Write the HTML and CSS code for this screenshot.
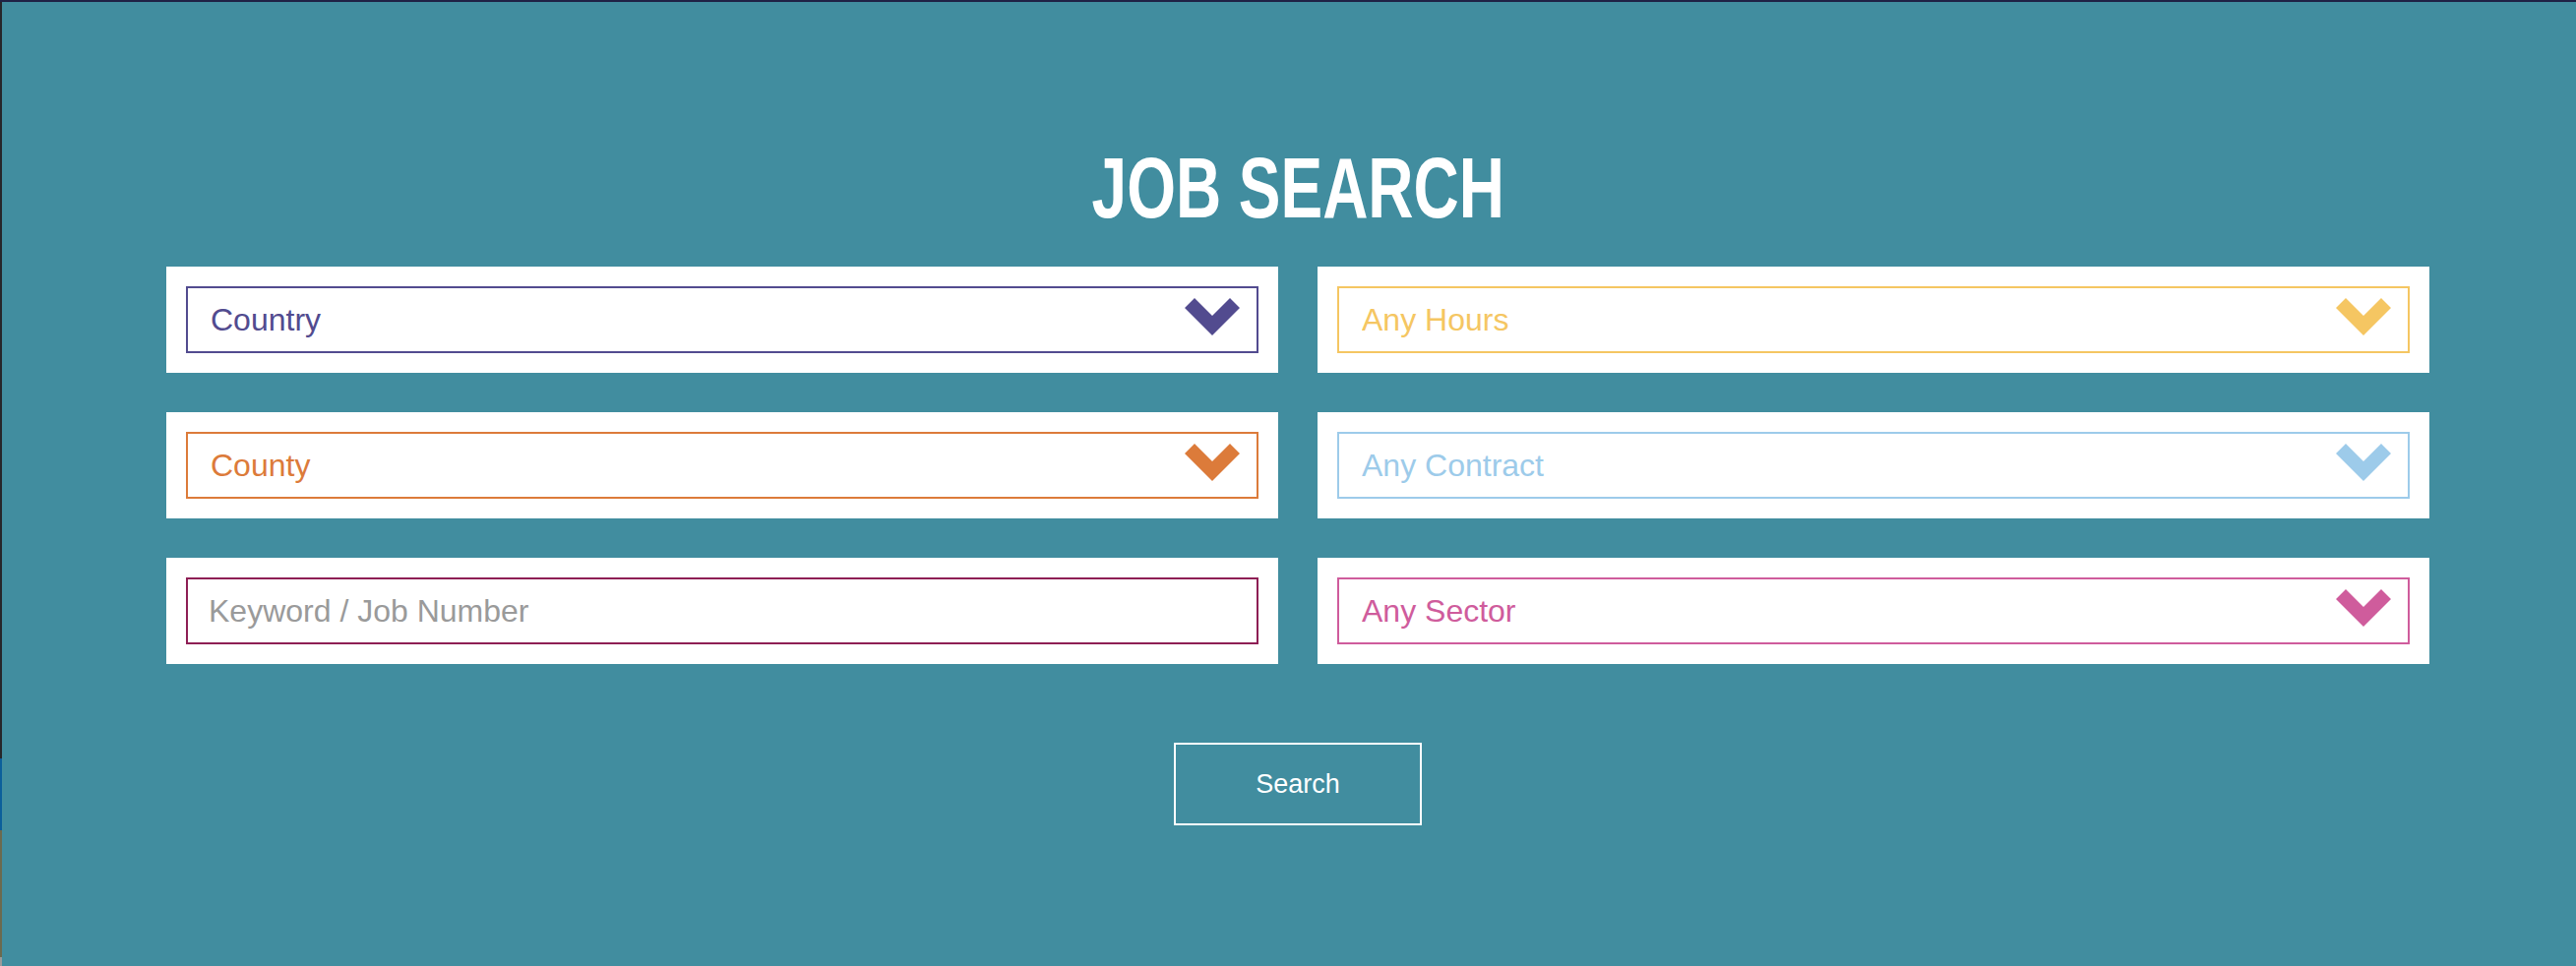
FILE: index.html
```html
<!DOCTYPE html>
<html lang="en">
<head>
<meta charset="utf-8">
<title>Job Search</title>
<link rel="stylesheet" href="styles.css">
</head>
<body>
<div class="edge"></div>
<main class="panel">
  <div class="container">
    <h1 class="title"><span class="title-text">JOB SEARCH</span></h1>
    <form class="grid">
      <div class="cell">
        <div class="field field-purple">
          <select class="control"><option>Country</option></select>
          <svg class="chev" viewBox="0 0 56 39"><polygon points="0,10 10,0 28,18 46,0 56,10 28,38"/></svg>
        </div>
      </div>
      <div class="cell">
        <div class="field field-yellow">
          <select class="control"><option>Any Hours</option></select>
          <svg class="chev" viewBox="0 0 56 39"><polygon points="0,10 10,0 28,18 46,0 56,10 28,38"/></svg>
        </div>
      </div>
      <div class="cell">
        <div class="field field-orange">
          <select class="control"><option>County</option></select>
          <svg class="chev" viewBox="0 0 56 39"><polygon points="0,10 10,0 28,18 46,0 56,10 28,38"/></svg>
        </div>
      </div>
      <div class="cell">
        <div class="field field-blue">
          <select class="control"><option>Any Contract</option></select>
          <svg class="chev" viewBox="0 0 56 39"><polygon points="0,10 10,0 28,18 46,0 56,10 28,38"/></svg>
        </div>
      </div>
      <div class="cell">
        <div class="field field-maroon">
          <input class="control input" type="text" placeholder="Keyword / Job Number">
        </div>
      </div>
      <div class="cell">
        <div class="field field-pink">
          <select class="control"><option>Any Sector</option></select>
          <svg class="chev" viewBox="0 0 56 39"><polygon points="0,10 10,0 28,18 46,0 56,10 28,38"/></svg>
        </div>
      </div>
    </form>
    <div class="actions">
      <button class="search" type="button">Search</button>
    </div>
  </div>
</main>
</body>
</html>
```
FILE: styles.css
```css
html, body {
  margin: 0;
  padding: 0;
  height: 100%;
}
body {
  display: flex;
  background: #418d9f;
  border-top: 2px solid #1f2245;
  box-sizing: border-box;
  font-family: "Liberation Sans", Arial, sans-serif;
  overflow: hidden;
}
.edge {
  width: 2px;
  flex: none;
  background: linear-gradient(to bottom, #26262a 0, #26262a 769px, #0b5f9b 769px, #0b5f9b 842px, #6b6a4f 842px, #6b6a4f 971px, #9a9a9a 971px);
}
.panel {
  flex: 1;
  background: #418d9f;
}
.container {
  width: 2300px;
  margin-left: 167px;
}
.title {
  margin: 145px 0 0;
  height: 124px;
  text-align: center;
  font-family: "Liberation Sans Narrow", "Liberation Sans", Arial, sans-serif;
  font-weight: 700;
  font-size: 87px;
  line-height: 87px;
  color: #fff;
  letter-spacing: 0;
}
.title-text {
  display: inline-block;
  transform: scaleX(0.735);
  transform-origin: center;
}
.grid {
  display: grid;
  grid-template-columns: 1fr 1fr;
  column-gap: 40px;
  row-gap: 40px;
  margin: 0;
}
.cell {
  background: #fff;
  padding: 20px;
}
.field {
  position: relative;
  height: 68px;
}
.control {
  display: block;
  width: 100%;
  height: 68px;
  box-sizing: border-box;
  margin: 0;
  padding: 0 80px 0 23px;
  border: 2px solid currentColor;
  border-radius: 0;
  background: #fff;
  font-family: "Liberation Sans", Arial, sans-serif;
  font-size: 32px;
  color: inherit;
  -webkit-appearance: none;
  appearance: none;
  outline: none;
}
.input {
  padding-left: 21px;
}
.input::placeholder {
  color: #9a9a9a;
  opacity: 1;
}
.chev {
  position: absolute;
  right: 19px;
  top: 12px;
  width: 56px;
  height: 39px;
  fill: currentColor;
  pointer-events: none;
}
.field-purple { color: #524b8f; }
.field-yellow { color: #f5c662; }
.field-orange { color: #dc7b3a; }
.field-blue { color: #9dcbea; }
.field-maroon { color: #8e1f55; }
.field-pink { color: #cf5c9c; }

.actions {
  display: flex;
  justify-content: center;
  margin-top: 80px;
}
.search {
  width: 252px;
  height: 84px;
  border: 2px solid #fff;
  background: transparent;
  color: #fff;
  font-family: "Liberation Sans", Arial, sans-serif;
  font-size: 27px;
  padding: 0;
  border-radius: 0;
  cursor: pointer;
}
```
